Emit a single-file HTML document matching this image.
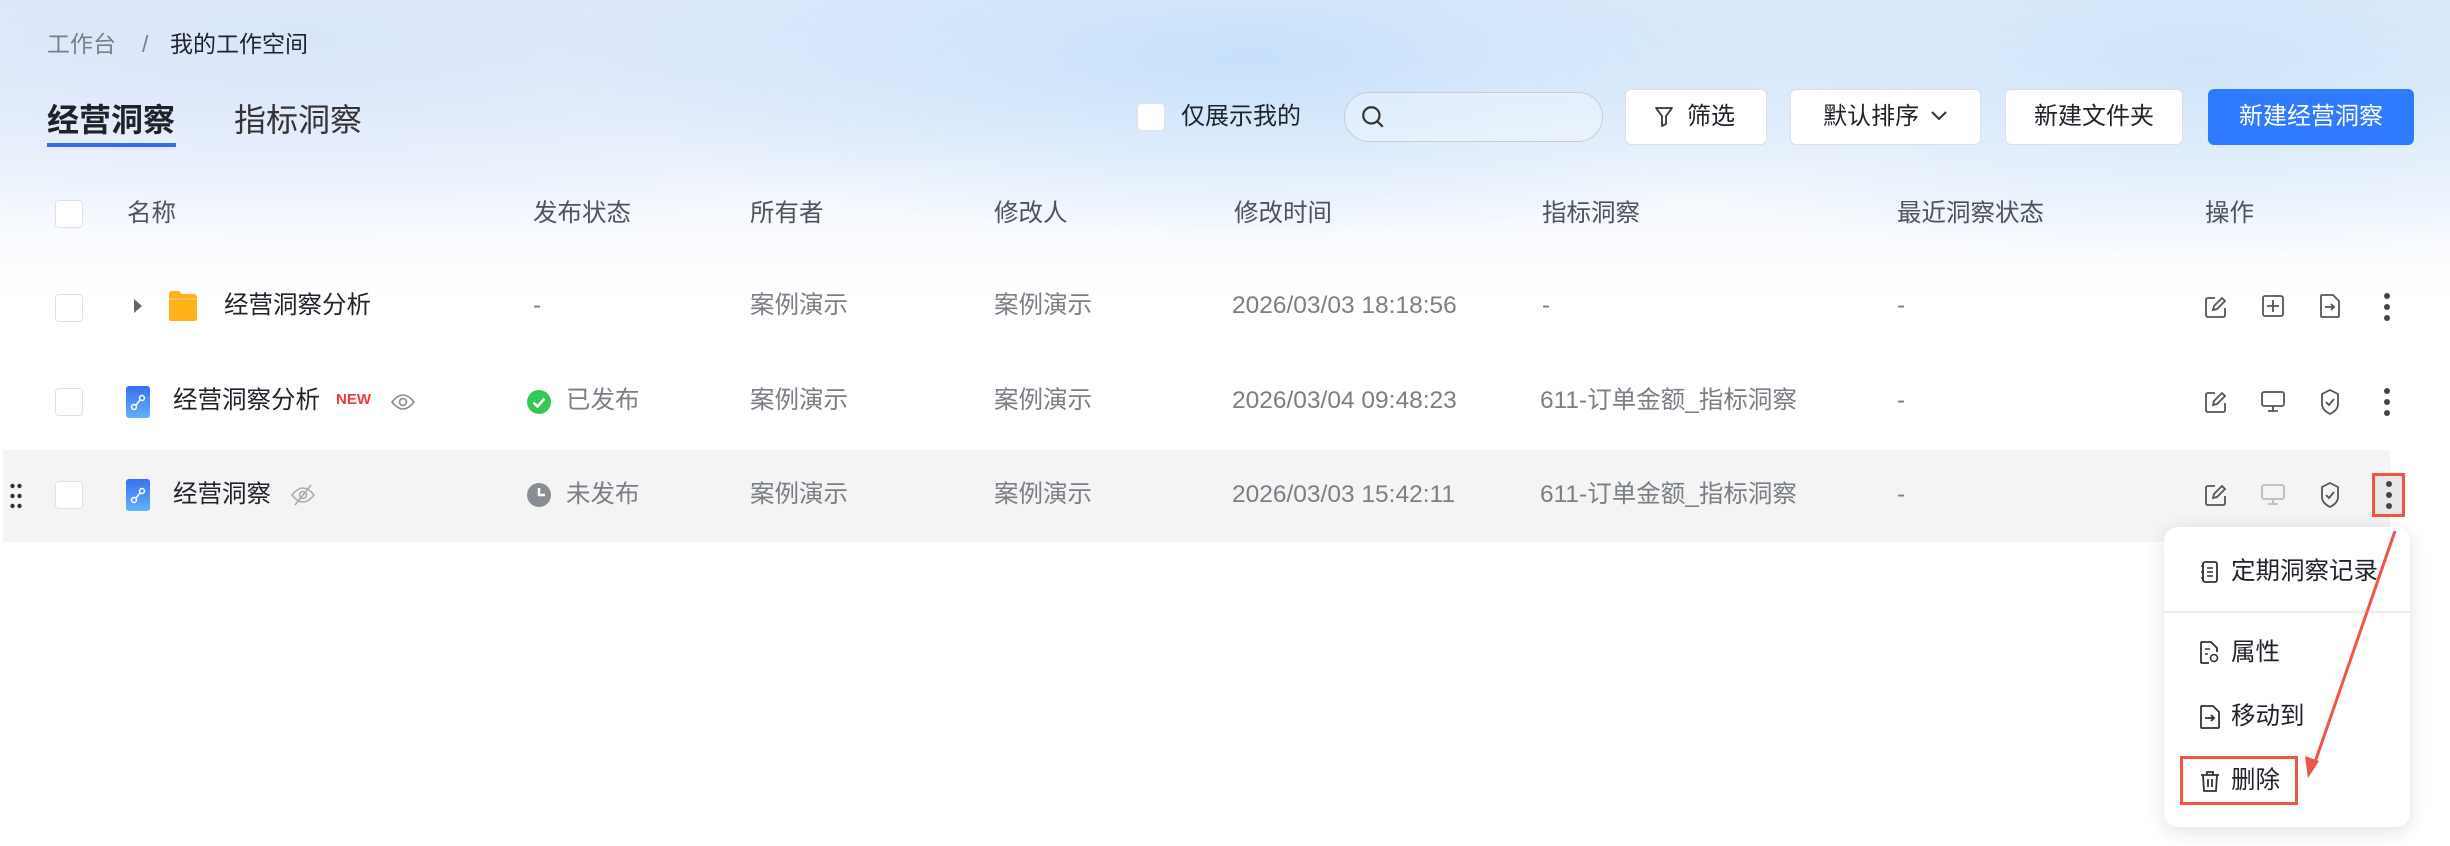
<!DOCTYPE html>
<html><head><meta charset="utf-8"><style>
*{margin:0;padding:0;box-sizing:border-box}
body{width:2450px;height:846px;overflow:hidden;background:#fff;font-family:"Liberation Sans","Noto Sans CJK SC",sans-serif;color:#1f2329;position:relative}
.bg{position:absolute;left:0;top:0;width:2450px;height:300px;background:
radial-gradient(ellipse 700px 180px at 1250px 60px,rgba(190,220,250,.8),transparent),
radial-gradient(ellipse 900px 200px at 300px 40px,rgba(215,228,250,.9),transparent),
radial-gradient(ellipse 700px 200px at 2200px 60px,rgba(200,225,250,.8),transparent),
linear-gradient(#e6eefb,#f3f7fd 60%,#fff)}
.a{position:absolute;white-space:nowrap}
.t{font-size:23px;line-height:30px}
.d{font-size:24.5px}
.g{color:#7a7e85}
.h{color:#4e5259}
.cb{position:absolute;width:28px;height:28px;border:1.5px solid #dfe1e5;border-radius:4px;background:#fff}
.btn{position:absolute;height:56px;border:1.5px solid #dcdfe4;border-radius:6px;background:#fff;font-size:23px;line-height:53px;text-align:center;color:#1f2329}
.ico{position:absolute}
</style></head><body>
<div class="bg"></div>
<div class="a t g" style="left:47px;top:29px">工作台</div>
<div class="a t g" style="left:142px;top:29px">/</div>
<div class="a t" style="left:170px;top:29px">我的工作空间</div>
<div class="a" style="left:47px;top:100px;font-size:32px;font-weight:bold;line-height:40px">经营洞察</div>
<div class="a" style="left:47px;top:143px;width:129px;height:4px;background:#2f6fed"></div>
<div class="a" style="left:234px;top:100px;font-size:32px;line-height:40px;color:#333">指标洞察</div>
<div class="cb" style="left:1137px;top:103px"></div>
<div class="a t" style="left:1181px;top:102px;font-size:24px">仅展示我的</div>
<div class="a" style="left:1344px;top:92px;width:259px;height:50px;border:1.5px solid #c9ced6;border-radius:25px;background:rgba(255,255,255,.3)"></div>
<svg class="ico" style="left:1360px;top:104px" width="26" height="26" viewBox="0 0 24 24"><circle cx="10.5" cy="10.5" r="7.5" fill="none" stroke="#333" stroke-width="2"/><path d="M16 16l5 5" stroke="#333" stroke-width="2"/></svg>
<div class="btn" style="left:1625px;top:89px;width:142px;font-size:24px"><span style="padding-left:30px">筛选</span></div>
<svg class="ico" style="left:1654px;top:106px" width="20" height="22" viewBox="0 0 20 22"><path d="M2 2h16l-6 8v8l-4 2V10z" fill="none" stroke="#333" stroke-width="1.8" stroke-linejoin="round"/></svg>
<div class="btn" style="left:1790px;top:89px;width:191px;font-size:24px">默认排序 <svg width="18" height="12" style="vertical-align:2px;margin-left:4px"><path d="M2 2l7 7 7-7" fill="none" stroke="#333" stroke-width="2"/></svg></div>
<div class="btn" style="left:2005px;top:89px;width:178px;font-size:24px">新建文件夹</div>
<div class="btn" style="left:2208px;top:89px;width:206px;background:#2e7bff;border-color:#2e7bff;color:#fff;font-size:24px">新建经营洞察</div>

<div class="cb" style="left:55px;top:200px"></div>
<div class="a t h d" style="left:127px;top:199px">名称</div>
<div class="a t h d" style="left:533px;top:199px">发布状态</div>
<div class="a t h d" style="left:750px;top:199px">所有者</div>
<div class="a t h d" style="left:994px;top:199px">修改人</div>
<div class="a t h d" style="left:1234px;top:199px">修改时间</div>
<div class="a t h d" style="left:1542px;top:199px">指标洞察</div>
<div class="a t h d" style="left:1897px;top:199px">最近洞察状态</div>
<div class="a t h d" style="left:2205px;top:199px">操作</div>

<div class="a" style="left:3px;top:450px;width:2387px;height:92px;background:#f4f4f5"></div>

<!-- row1 -->
<div class="cb" style="left:55px;top:294px"></div>
<svg class="ico" style="left:132px;top:298px" width="12" height="16"><path d="M2 1l8 7-8 7z" fill="#666"/></svg>
<svg class="ico" style="left:168px;top:290px" width="30" height="32"><path d="M1 4q0-3 3-3h7l3 3h12q3 0 3 3v22q0 2-2 2H3q-2 0-2-2z" fill="#ffb21a"/><path d="M1 9h28" stroke="#fff" stroke-opacity=".5"/></svg>
<div class="a t d" style="left:224px;top:291px">经营洞察分析</div>
<div class="a t g d" style="left:533px;top:291px">-</div>
<div class="a t g d" style="left:750px;top:291px">案例演示</div>
<div class="a t g d" style="left:994px;top:291px">案例演示</div>
<div class="a t g d" style="left:1232px;top:291px">2026/03/03 18:18:56</div>
<div class="a t g d" style="left:1542px;top:291px">-</div>
<div class="a t g d" style="left:1897px;top:291px">-</div>

<!-- row2 -->
<div class="cb" style="left:55px;top:388px"></div>
<svg class="ico" style="left:126px;top:386px" width="24" height="32"><defs><linearGradient id="lg" x1="0" y1="0" x2="0" y2="1"><stop offset="0" stop-color="#3b6ff0"/><stop offset="1" stop-color="#5fb3ff"/></linearGradient></defs><rect width="24" height="32" rx="3" fill="url(#lg)"/><circle cx="8" cy="21" r="2.5" fill="none" stroke="#fff" stroke-width="1.5"/><circle cx="16" cy="12" r="2.5" fill="none" stroke="#fff" stroke-width="1.5"/><path d="M10 19l4-5" stroke="#fff" stroke-width="1.5"/></svg>
<div class="a t d" style="left:173px;top:386px">经营洞察分析</div>
<div class="a" style="left:336px;top:391px;font-size:15px;font-weight:bold;color:#f03b3b">NEW</div>
<svg class="ico" style="left:391px;top:393px" width="24" height="18"><path d="M1 9q11-14 22 0q-11 14-22 0z" fill="none" stroke="#888" stroke-width="1.6"/><circle cx="12" cy="9" r="3.5" fill="none" stroke="#888" stroke-width="1.6"/></svg>
<svg class="ico" style="left:527px;top:390px" width="24" height="24"><circle cx="12" cy="12" r="12" fill="#34c759"/><path d="M6.5 12.5l4 4 7-8" fill="none" stroke="#fff" stroke-width="2.5"/></svg>
<div class="a t g d" style="left:566px;top:386px">已发布</div>
<div class="a t g d" style="left:750px;top:386px">案例演示</div>
<div class="a t g d" style="left:994px;top:386px">案例演示</div>
<div class="a t g d" style="left:1232px;top:386px">2026/03/04 09:48:23</div>
<div class="a t g d" style="left:1540px;top:386px">611-订单金额_指标洞察</div>
<div class="a t g d" style="left:1897px;top:386px">-</div>

<!-- row3 -->
<svg class="ico" style="left:10px;top:483px" width="12" height="26"><g fill="#333"><circle cx="2.5" cy="3" r="2.2"/><circle cx="9.5" cy="3" r="2.2"/><circle cx="2.5" cy="13" r="2.2"/><circle cx="9.5" cy="13" r="2.2"/><circle cx="2.5" cy="23" r="2.2"/><circle cx="9.5" cy="23" r="2.2"/></g></svg>
<div class="cb" style="left:55px;top:481px"></div>
<svg class="ico" style="left:126px;top:479px" width="24" height="32"><rect width="24" height="32" rx="3" fill="url(#lg)"/><circle cx="8" cy="21" r="2.5" fill="none" stroke="#fff" stroke-width="1.5"/><circle cx="16" cy="12" r="2.5" fill="none" stroke="#fff" stroke-width="1.5"/><path d="M10 19l4-5" stroke="#fff" stroke-width="1.5"/></svg>
<div class="a t d" style="left:173px;top:480px">经营洞察</div>
<svg class="ico" style="left:291px;top:484px" width="24" height="22"><path d="M1 11q11-14 22 0q-11 14-22 0z" fill="none" stroke="#aaa" stroke-width="1.6"/><circle cx="12" cy="11" r="3.5" fill="none" stroke="#aaa" stroke-width="1.6"/><path d="M4 21L20 1" stroke="#aaa" stroke-width="1.6"/></svg>
<svg class="ico" style="left:527px;top:483px" width="24" height="24"><circle cx="12" cy="12" r="12" fill="#8a8d93"/><path d="M12 5v7h6" fill="none" stroke="#fff" stroke-width="2.5"/></svg>
<div class="a t g d" style="left:566px;top:480px">未发布</div>
<div class="a t g d" style="left:750px;top:480px">案例演示</div>
<div class="a t g d" style="left:994px;top:480px">案例演示</div>
<div class="a t g d" style="left:1232px;top:480px">2026/03/03 15:42:11</div>
<div class="a t g d" style="left:1540px;top:480px">611-订单金额_指标洞察</div>
<div class="a t g d" style="left:1897px;top:480px">-</div>

<!-- op icons -->
<svg class="ico" style="left:2204px;top:295px" width="24" height="24" viewBox="0 0 24 24"><path d="M11 3H4q-2 0-2 2v15q0 2 2 2h15q2 0 2-2v-7" fill="none" stroke="#555" stroke-width="1.8"/><path d="M9 15l1-4 8-8 3 3-8 8z" fill="none" stroke="#555" stroke-width="1.8"/></svg>
<svg class="ico" style="left:2262px;top:295px" width="22" height="22" viewBox="0 0 22 22"><rect x="1" y="1" width="20" height="20" rx="2" fill="none" stroke="#555" stroke-width="1.8"/><path d="M11 5v12M5 11h12" stroke="#555" stroke-width="1.8"/></svg>
<svg class="ico" style="left:2320px;top:294px" width="20" height="24" viewBox="0 0 20 24"><path d="M2 1h11l6 6v15q0 1-1 1H2q-1 0-1-1V2q0-1 1-1z" fill="none" stroke="#555" stroke-width="1.8"/><path d="M5 13h9M11 10l3 3-3 3" fill="none" stroke="#555" stroke-width="1.8"/></svg>
<svg class="ico" style="left:2383px;top:292px" width="8" height="30"><g fill="#444"><circle cx="4" cy="4" r="3"/><circle cx="4" cy="15" r="3"/><circle cx="4" cy="26" r="3"/></g></svg>

<svg class="ico" style="left:2204px;top:390px" width="24" height="24" viewBox="0 0 24 24"><path d="M11 3H4q-2 0-2 2v15q0 2 2 2h15q2 0 2-2v-7" fill="none" stroke="#555" stroke-width="1.8"/><path d="M9 15l1-4 8-8 3 3-8 8z" fill="none" stroke="#555" stroke-width="1.8"/></svg>
<svg class="ico" style="left:2261px;top:391px" width="24" height="22" viewBox="0 0 24 22"><rect x="1" y="1" width="22" height="14" rx="2" fill="none" stroke="#555" stroke-width="1.8"/><path d="M12 15v5M7 20h10" stroke="#555" stroke-width="1.8"/></svg>
<svg class="ico" style="left:2320px;top:389px" width="20" height="26" viewBox="0 0 20 26"><path d="M10 1l8 4v10q0 6-8 10q-8-4-8-10V5z" fill="none" stroke="#555" stroke-width="1.8"/><path d="M6 13l3 3 5-6" fill="none" stroke="#555" stroke-width="1.8"/></svg>
<svg class="ico" style="left:2383px;top:387px" width="8" height="30"><g fill="#444"><circle cx="4" cy="4" r="3"/><circle cx="4" cy="15" r="3"/><circle cx="4" cy="26" r="3"/></g></svg>

<svg class="ico" style="left:2204px;top:483px" width="24" height="24" viewBox="0 0 24 24"><path d="M11 3H4q-2 0-2 2v15q0 2 2 2h15q2 0 2-2v-7" fill="none" stroke="#555" stroke-width="1.8"/><path d="M9 15l1-4 8-8 3 3-8 8z" fill="none" stroke="#555" stroke-width="1.8"/></svg>
<svg class="ico" style="left:2261px;top:484px" width="24" height="22" viewBox="0 0 24 22"><rect x="1" y="1" width="22" height="14" rx="2" fill="none" stroke="#bbb" stroke-width="1.8"/><path d="M12 15v5M7 20h10" stroke="#bbb" stroke-width="1.8"/></svg>
<svg class="ico" style="left:2320px;top:482px" width="20" height="26" viewBox="0 0 20 26"><path d="M10 1l8 4v10q0 6-8 10q-8-4-8-10V5z" fill="none" stroke="#555" stroke-width="1.8"/><path d="M6 13l3 3 5-6" fill="none" stroke="#555" stroke-width="1.8"/></svg>
<div class="a" style="left:2372px;top:473px;width:33px;height:44px;background:#e8e8ea;border:3px solid #f05545"></div>
<svg class="ico" style="left:2385px;top:480px" width="8" height="30"><g fill="#444"><circle cx="4" cy="4" r="3"/><circle cx="4" cy="15" r="3"/><circle cx="4" cy="26" r="3"/></g></svg>

<!-- menu -->
<div class="a" style="left:2164px;top:527px;width:246px;height:300px;background:#fff;border-radius:14px;box-shadow:0 4px 20px rgba(0,0,0,.12)"></div>
<div class="a" style="left:2164px;top:611px;width:246px;height:1.5px;background:#ebebeb"></div>
<svg class="ico" style="left:2200px;top:561px" width="18" height="22" viewBox="0 0 18 22"><rect x="3" y="1" width="14" height="20" rx="2" fill="none" stroke="#333" stroke-width="1.8"/><path d="M7 7h6M7 11h6M7 15h6M1 5h3M1 11h3M1 17h3" stroke="#333" stroke-width="1.6"/></svg>
<div class="a t d" style="left:2231px;top:557px">定期洞察记录</div>
<svg class="ico" style="left:2200px;top:641px" width="20" height="24" viewBox="0 0 20 24"><path d="M9 22H2q-1 0-1-1V2q0-1 1-1h9l6 6v4" fill="none" stroke="#333" stroke-width="1.8"/><path d="M5 8h5M5 13h3" stroke="#333" stroke-width="1.6"/><circle cx="14" cy="17" r="3.5" fill="none" stroke="#333" stroke-width="1.6"/></svg>
<div class="a t d" style="left:2231px;top:638px">属性</div>
<svg class="ico" style="left:2200px;top:705px" width="20" height="24" viewBox="0 0 20 24"><path d="M2 1h11l6 6v15q0 1-1 1H2q-1 0-1-1V2q0-1 1-1z" fill="none" stroke="#333" stroke-width="1.8"/><path d="M5 13h9M11 10l3 3-3 3" fill="none" stroke="#333" stroke-width="1.8"/></svg>
<div class="a t d" style="left:2231px;top:702px">移动到</div>
<svg class="ico" style="left:2200px;top:770px" width="20" height="22" viewBox="0 0 20 22"><path d="M1 5h18M7 5V2h6v3M3 5l1 16h12l1-16M8 9v8M12 9v8" fill="none" stroke="#333" stroke-width="1.8"/></svg>
<div class="a t d" style="left:2231px;top:766px">删除</div>
<div class="a" style="left:2180px;top:756px;width:118px;height:49px;border:3px solid #f05545"></div>
<svg class="ico" style="left:0;top:0" width="2450" height="846"><path d="M2395 531L2313 768" stroke="#f05545" stroke-width="3"/><path d="M2308 778l-3-22 14 5z" fill="#f05545"/></svg>
</body></html>
